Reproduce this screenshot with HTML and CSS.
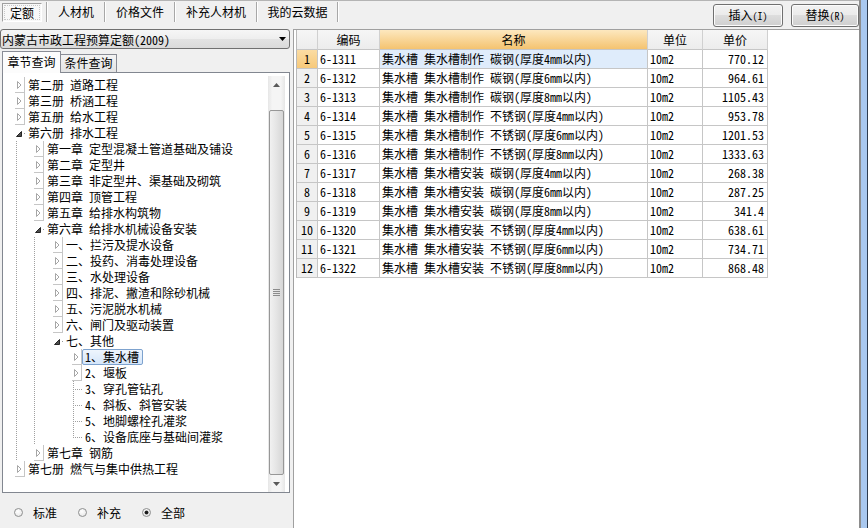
FILE: index.html
```html
<!DOCTYPE html>
<html lang="zh-CN">
<head>
<meta charset="utf-8">
<title>定额</title>
<link rel="stylesheet" href="styles.css">
</head>
<body>
<div class="app">
  <div class="main">
    <div class="topbar">
      <div class="tabs">
        <div class="tab w1"><span class="tab-face">定额</span></div>
        <div class="sep"></div>
        <div class="tab w2">人材机</div>
        <div class="sep"></div>
        <div class="tab w3">价格文件</div>
        <div class="sep"></div>
        <div class="tab w4">补充人材机</div>
        <div class="sep"></div>
        <div class="tab w5">我的云数据</div>
        <div class="sep"></div>
      </div>
      <div class="actions">
        <button class="btn b1">插入<span class="acc">(I)</span></button>
        <button class="btn b2">替换<span class="acc">(R)</span></button>
      </div>
    </div>
    <div class="body">
      <div class="left">
        <div class="combo">
          <span>内蒙古市政工程预算定额(2009)</span>
          <svg class="arrow" width="7" height="4" viewBox="0 0 7 4"><path d="M0 0H7L3.5 4Z" fill="#000"/></svg>
        </div>
        <div class="subtabs">
          <div class="subtab on">章节查询</div>
          <div class="subtab">条件查询</div>
        </div>
        <div class="treebox">
          <div class="tree">
            <div class="row l0"><span class="exp c"><svg width="5" height="8" viewBox="0 0 5 8"><path d="M0.5 0.5L4 4L0.5 7.5Z" fill="#fff" stroke="#a6a6a6"/></svg></span><span class="lbl">第二册 道路工程</span></div>
            <div class="row l0"><span class="exp c"><svg width="5" height="8" viewBox="0 0 5 8"><path d="M0.5 0.5L4 4L0.5 7.5Z" fill="#fff" stroke="#a6a6a6"/></svg></span><span class="lbl">第三册 桥涵工程</span></div>
            <div class="row l0"><span class="exp c"><svg width="5" height="8" viewBox="0 0 5 8"><path d="M0.5 0.5L4 4L0.5 7.5Z" fill="#fff" stroke="#a6a6a6"/></svg></span><span class="lbl">第五册 给水工程</span></div>
            <div class="row l0"><span class="exp o"><svg width="6" height="6" viewBox="0 0 6 6"><path d="M5.5 0.5V5.5H0.5Z" fill="#4d4d4d" stroke="#262626" stroke-linejoin="round"/></svg></span><span class="lbl">第六册 排水工程</span></div>
            <div class="kids line0">
              <div class="row l1"><span class="exp c"><svg width="5" height="8" viewBox="0 0 5 8"><path d="M0.5 0.5L4 4L0.5 7.5Z" fill="#fff" stroke="#a6a6a6"/></svg></span><span class="lbl">第一章 定型混凝土管道基础及铺设</span></div>
              <div class="row l1"><span class="exp c"><svg width="5" height="8" viewBox="0 0 5 8"><path d="M0.5 0.5L4 4L0.5 7.5Z" fill="#fff" stroke="#a6a6a6"/></svg></span><span class="lbl">第二章 定型井</span></div>
              <div class="row l1"><span class="exp c"><svg width="5" height="8" viewBox="0 0 5 8"><path d="M0.5 0.5L4 4L0.5 7.5Z" fill="#fff" stroke="#a6a6a6"/></svg></span><span class="lbl">第三章 非定型井、渠基础及砌筑</span></div>
              <div class="row l1"><span class="exp c"><svg width="5" height="8" viewBox="0 0 5 8"><path d="M0.5 0.5L4 4L0.5 7.5Z" fill="#fff" stroke="#a6a6a6"/></svg></span><span class="lbl">第四章 顶管工程</span></div>
              <div class="row l1"><span class="exp c"><svg width="5" height="8" viewBox="0 0 5 8"><path d="M0.5 0.5L4 4L0.5 7.5Z" fill="#fff" stroke="#a6a6a6"/></svg></span><span class="lbl">第五章 给排水构筑物</span></div>
              <div class="row l1"><span class="exp o"><svg width="6" height="6" viewBox="0 0 6 6"><path d="M5.5 0.5V5.5H0.5Z" fill="#4d4d4d" stroke="#262626" stroke-linejoin="round"/></svg></span><span class="lbl">第六章 给排水机械设备安装</span></div>
              <div class="kids line1">
                <div class="row l2"><span class="exp c"><svg width="5" height="8" viewBox="0 0 5 8"><path d="M0.5 0.5L4 4L0.5 7.5Z" fill="#fff" stroke="#a6a6a6"/></svg></span><span class="lbl">一、拦污及提水设备</span></div>
                <div class="row l2"><span class="exp c"><svg width="5" height="8" viewBox="0 0 5 8"><path d="M0.5 0.5L4 4L0.5 7.5Z" fill="#fff" stroke="#a6a6a6"/></svg></span><span class="lbl">二、投药、消毒处理设备</span></div>
                <div class="row l2"><span class="exp c"><svg width="5" height="8" viewBox="0 0 5 8"><path d="M0.5 0.5L4 4L0.5 7.5Z" fill="#fff" stroke="#a6a6a6"/></svg></span><span class="lbl">三、水处理设备</span></div>
                <div class="row l2"><span class="exp c"><svg width="5" height="8" viewBox="0 0 5 8"><path d="M0.5 0.5L4 4L0.5 7.5Z" fill="#fff" stroke="#a6a6a6"/></svg></span><span class="lbl">四、排泥、撇渣和除砂机械</span></div>
                <div class="row l2"><span class="exp c"><svg width="5" height="8" viewBox="0 0 5 8"><path d="M0.5 0.5L4 4L0.5 7.5Z" fill="#fff" stroke="#a6a6a6"/></svg></span><span class="lbl">五、污泥脱水机械</span></div>
                <div class="row l2"><span class="exp c"><svg width="5" height="8" viewBox="0 0 5 8"><path d="M0.5 0.5L4 4L0.5 7.5Z" fill="#fff" stroke="#a6a6a6"/></svg></span><span class="lbl">六、闸门及驱动装置</span></div>
                <div class="row l2"><span class="exp o"><svg width="6" height="6" viewBox="0 0 6 6"><path d="M5.5 0.5V5.5H0.5Z" fill="#4d4d4d" stroke="#262626" stroke-linejoin="round"/></svg></span><span class="lbl">七、其他</span></div>
                <div class="kids">
                  <div class="row l3"><span class="exp c"><svg width="5" height="8" viewBox="0 0 5 8"><path d="M0.5 0.5L4 4L0.5 7.5Z" fill="#fff" stroke="#a6a6a6"/></svg></span><span class="lbl sel">1、集水槽</span></div>
                  <div class="row l3"><span class="exp c"><svg width="5" height="8" viewBox="0 0 5 8"><path d="M0.5 0.5L4 4L0.5 7.5Z" fill="#fff" stroke="#a6a6a6"/></svg></span><span class="lbl">2、堰板</span></div>
                  <div class="row l3"><span class="exp leaf"></span><span class="lbl">3、穿孔管钻孔</span></div>
                  <div class="row l3"><span class="exp leaf"></span><span class="lbl">4、斜板、斜管安装</span></div>
                  <div class="row l3"><span class="exp leaf"></span><span class="lbl">5、地脚螺栓孔灌浆</span></div>
                  <div class="row l3"><span class="exp leaf last"></span><span class="lbl">6、设备底座与基础间灌浆</span></div>
                </div>
              </div>
              <div class="row l1"><span class="exp c"><svg width="5" height="8" viewBox="0 0 5 8"><path d="M0.5 0.5L4 4L0.5 7.5Z" fill="#fff" stroke="#a6a6a6"/></svg></span><span class="lbl">第七章 钢筋</span></div>
            </div>
            <div class="row l0"><span class="exp c"><svg width="5" height="8" viewBox="0 0 5 8"><path d="M0.5 0.5L4 4L0.5 7.5Z" fill="#fff" stroke="#a6a6a6"/></svg></span><span class="lbl">第七册 燃气与集中供热工程</span></div>
          </div>
          <div class="vscroll">
            <div class="sb-btn"><svg width="7" height="4" viewBox="0 0 7 4"><path d="M0 4L3.5 0L7 4Z" fill="#5a5a5a"/></svg></div>
            <div class="sb-track"></div>
            <div class="sb-thumb"><svg width="7" height="7" viewBox="0 0 7 7"><path d="M0 0.5H7M0 2.5H7M0 4.5H7M0 6.5H7" stroke="#8c8c8c"/></svg></div>
            <div class="sb-btn"><svg width="7" height="4" viewBox="0 0 7 4"><path d="M0 0H7L3.5 4Z" fill="#5a5a5a"/></svg></div>
          </div>
        </div>
        <div class="radios">
          <label class="radio"><span class="circle"></span><span>标准</span></label>
          <label class="radio"><span class="circle"></span><span>补充</span></label>
          <label class="radio"><span class="circle checked"><span class="dot"></span></span><span>全部</span></label>
        </div>
      </div>
      <div class="right">
        <div class="grid">
          <div class="c hd"></div><div class="c hd">编码</div><div class="c hd sel">名称</div><div class="c hd">单位</div><div class="c hd">单价</div>

          <div class="c rn cur">1</div><div class="c">6-1311</div><div class="c curcell">集水槽 集水槽制作 碳钢(厚度4mm以内)</div><div class="c">10m2</div><div class="c num">770.12</div>
          <div class="c rn">2</div><div class="c">6-1312</div><div class="c">集水槽 集水槽制作 碳钢(厚度6mm以内)</div><div class="c">10m2</div><div class="c num">964.61</div>
          <div class="c rn">3</div><div class="c">6-1313</div><div class="c">集水槽 集水槽制作 碳钢(厚度8mm以内)</div><div class="c">10m2</div><div class="c num">1105.43</div>
          <div class="c rn">4</div><div class="c">6-1314</div><div class="c">集水槽 集水槽制作 不锈钢(厚度4mm以内)</div><div class="c">10m2</div><div class="c num">953.78</div>
          <div class="c rn">5</div><div class="c">6-1315</div><div class="c">集水槽 集水槽制作 不锈钢(厚度6mm以内)</div><div class="c">10m2</div><div class="c num">1201.53</div>
          <div class="c rn">6</div><div class="c">6-1316</div><div class="c">集水槽 集水槽制作 不锈钢(厚度8mm以内)</div><div class="c">10m2</div><div class="c num">1333.63</div>
          <div class="c rn">7</div><div class="c">6-1317</div><div class="c">集水槽 集水槽安装 碳钢(厚度4mm以内)</div><div class="c">10m2</div><div class="c num">268.38</div>
          <div class="c rn">8</div><div class="c">6-1318</div><div class="c">集水槽 集水槽安装 碳钢(厚度6mm以内)</div><div class="c">10m2</div><div class="c num">287.25</div>
          <div class="c rn">9</div><div class="c">6-1319</div><div class="c">集水槽 集水槽安装 碳钢(厚度8mm以内)</div><div class="c">10m2</div><div class="c num">341.4</div>
          <div class="c rn">10</div><div class="c">6-1320</div><div class="c">集水槽 集水槽安装 不锈钢(厚度4mm以内)</div><div class="c">10m2</div><div class="c num">638.61</div>
          <div class="c rn">11</div><div class="c">6-1321</div><div class="c">集水槽 集水槽安装 不锈钢(厚度6mm以内)</div><div class="c">10m2</div><div class="c num">734.71</div>
          <div class="c rn">12</div><div class="c">6-1322</div><div class="c">集水槽 集水槽安装 不锈钢(厚度8mm以内)</div><div class="c">10m2</div><div class="c num">868.48</div>
        </div>
      </div>
    </div>
  </div>
  <div class="frame"></div>
</div>
</body>
</html>
```

FILE: styles.css
```css
* { box-sizing: border-box; }
html, body { margin: 0; padding: 0; }
body {
  width: 868px;
  height: 528px;
  overflow: hidden;
  background: #f0f0f0;
  font-family: "Noto Sans Mono CJK SC", "Noto Sans CJK SC", sans-serif;
  font-size: 12px;
  color: #000;
}
.app { display: flex; width: 868px; height: 528px; }
.main { width: 859px; display: flex; flex-direction: column; }
.frame {
  width: 9px;
  border-left: 2px solid #8d8d8d;
  border-right: 1px solid #2d3b4e;
  background: #a9c8ef;
}

/* top bar */
.topbar { height: 29px; flex: none; display: flex; border-top: 1px solid #b4b4b4; }
.tabs { display: flex; align-items: center; height: 22px; }
.tab { text-align: center; line-height: 20px; white-space: nowrap; }
.w1 { width: 46px; text-align: left; padding-left: 2px; }
.w2 { width: 56px; }
.w3 { width: 68px; }
.w4 { width: 80px; }
.w5 { width: 79px; }
.tab-face {
  display: block;
  width: 40px;
  height: 19px;
  line-height: 17px;
  text-align: center;
  background: #f8f8f8;
  border: 1px solid;
  border-color: #a0a0a0 #ffffff #ffffff #a0a0a0;
  outline: 1px dotted #c8c8c8;
  outline-offset: -3px;
}
.sep { width: 2px; height: 20px; border-left: 1px solid #a7a7a7; border-right: 1px solid #ffffff; }
.actions { margin-left: auto; display: flex; gap: 8px; padding-top: 3px; }
.btn {
  font: inherit;
  height: 23px;
  padding: 0;
  border: 1px solid #707070;
  border-radius: 3px;
  background: linear-gradient(#f2f2f2 0%, #ebebeb 49%, #dddddd 50%, #cfcfcf 100%);
  box-shadow: inset 0 0 0 1px #fcfcfc;
  color: #000;
  line-height: 20px;
}
.b1 { width: 70px; }
.b2 { width: 68px; }
.acc { font-size: 10px; }

/* body */
.body { flex: 1; display: flex; min-height: 0; }
.left { width: 291px; flex: none; display: flex; flex-direction: column; }
.combo {
  width: 290px;
  height: 20px;
  flex: none;
  display: flex;
  align-items: center;
  justify-content: space-between;
  padding: 0 3px 0 1px;
  border: 1px solid #707070;
  border-radius: 3px;
  background: linear-gradient(#f6f6f6 0%, #eeeeee 49%, #e3e3e3 50%, #dadada 100%);
  white-space: nowrap;
}
.subtabs { height: 23px; flex: none; display: flex; align-items: flex-end; padding-left: 2px; }
.subtab {
  height: 18px;
  width: 57px;
  margin-left: -1px;
  border: 1px solid #898c95;
  border-bottom: none;
  background: linear-gradient(#f3f3f3, #e3e3e3);
  text-align: center;
  line-height: 16px;
}
.subtab.on {
  height: 22px;
  width: 59px;
  margin-left: 0;
  margin-bottom: -1px;
  background: #fcfcfc;
  line-height: 20px;
  position: relative;
  z-index: 1;
}
.treebox {
  margin-left: 2px;
  width: 288px;
  height: 421px;
  flex: none;
  border: 1px solid #828790;
  background: #fff;
  display: flex;
}
.tree { flex: 1; padding-top: 4px; }
.row { height: 16px; display: flex; align-items: center; white-space: nowrap; }
.l0 { padding-left: 12px; }
.l1 { padding-left: 31px; }
.l2 { padding-left: 50px; }
.l3 { padding-left: 69px; }
.exp {
  width: 10px;
  height: 16px;
  flex: none;
  display: flex;
  align-items: center;
  background-image: linear-gradient(#9a9a9a, #9a9a9a);
  background-repeat: no-repeat;
  background-size: 1px 1px;
  background-position: 9px 8px;
}
.exp.c { padding-left: 2px; }
.exp.o { padding-left: 1px; padding-top: 1px; }
.exp.leaf {
  background-image:
    repeating-linear-gradient(to bottom, #a0a0a0 0 1px, transparent 1px 2px),
    repeating-linear-gradient(to right, #a0a0a0 0 1px, transparent 1px 2px);
  background-size: 1px 16px, 9px 1px;
  background-position: 1px 0, 1px 8px;
}
.exp.leaf.last { background-size: 1px 9px, 9px 1px; }
.kids.line0 {
  background: repeating-linear-gradient(to bottom, #a0a0a0 0 1px, transparent 1px 2px) no-repeat 13px 0 / 1px 100%;
}
.kids.line1 {
  background: repeating-linear-gradient(to bottom, #a0a0a0 0 1px, transparent 1px 2px) no-repeat 31px 0 / 1px 100%;
}
.lbl {
  height: 16px;
  line-height: 14px;
  border: 1px solid transparent;
  border-radius: 2px;
  padding: 0 3px 0 2px;
}
.lbl.sel {
  border-color: #7da2ce;
  background: linear-gradient(#eef5fd, #d5e6fa);
}
.vscroll {
  width: 17px;
  margin: 3px 4px 0 0;
  height: 416px;
  display: flex;
  flex-direction: column;
  background: linear-gradient(to right, #e6e6e6, #f5f5f5 25%, #f5f5f5 75%, #e6e6e6);
}
.sb-btn { height: 17px; display: flex; align-items: center; justify-content: center; }
.sb-track { height: 17px; }
.sb-thumb {
  height: 365px;
  margin: 0 1px;
  border: 1px solid #979797;
  border-radius: 2px;
  background: linear-gradient(to right, #f1f1f1, #e6e6e6 45%, #d6d6d6);
  display: flex;
  align-items: center;
  justify-content: center;
}
.radios { flex: 1; display: flex; align-items: center; padding: 3px 0 0 14px; gap: 21px; }
.radio { display: flex; align-items: center; gap: 10px; }
.circle {
  width: 9px;
  height: 9px;
  border: 1px solid #8e8f8f;
  border-radius: 50%;
  background: radial-gradient(circle at 40% 35%, #ffffff, #e2e2e2);
  display: flex;
  align-items: center;
  justify-content: center;
}
.dot { width: 3px; height: 3px; border-radius: 50%; background: #1a1a1a; box-shadow: 0 0 0 0.5px #333; }

/* right grid */
.right {
  flex: 1;
  margin-left: 2px;
  border-left: 1px solid #a0a0a0;
  border-top: 1px solid #a0a0a0;
  background: #fff;
  padding-left: 2px;
}
.grid {
  display: grid;
  grid-template-columns: 21px 62px 268px 55px 65px;
  grid-template-rows: 20px;
  grid-auto-rows: 19px;
  width: 472px;
  border-left: 1px solid #b9b9b9;
}
.c {
  border-right: 1px solid #c6c6c6;
  border-bottom: 1px solid #c6c6c6;
  padding: 0 2px;
  line-height: 18px;
  white-space: nowrap;
  overflow: hidden;
}
.hd { background: linear-gradient(#f6f6f6, #ececec); text-align: center; line-height: 19px; border-color: #d0d0d0; border-bottom-color: #c6c6c6; }
.hd.sel { background: linear-gradient(#fde8bf, #f4c370); }
.rn { text-align: center; background: #f0f0f0; padding: 0; }
.rn.cur { background: linear-gradient(#fbdca3, #f7c97a); }
.curcell { background: #dfecfb; }
.num { text-align: right; padding-right: 3px; }
```
